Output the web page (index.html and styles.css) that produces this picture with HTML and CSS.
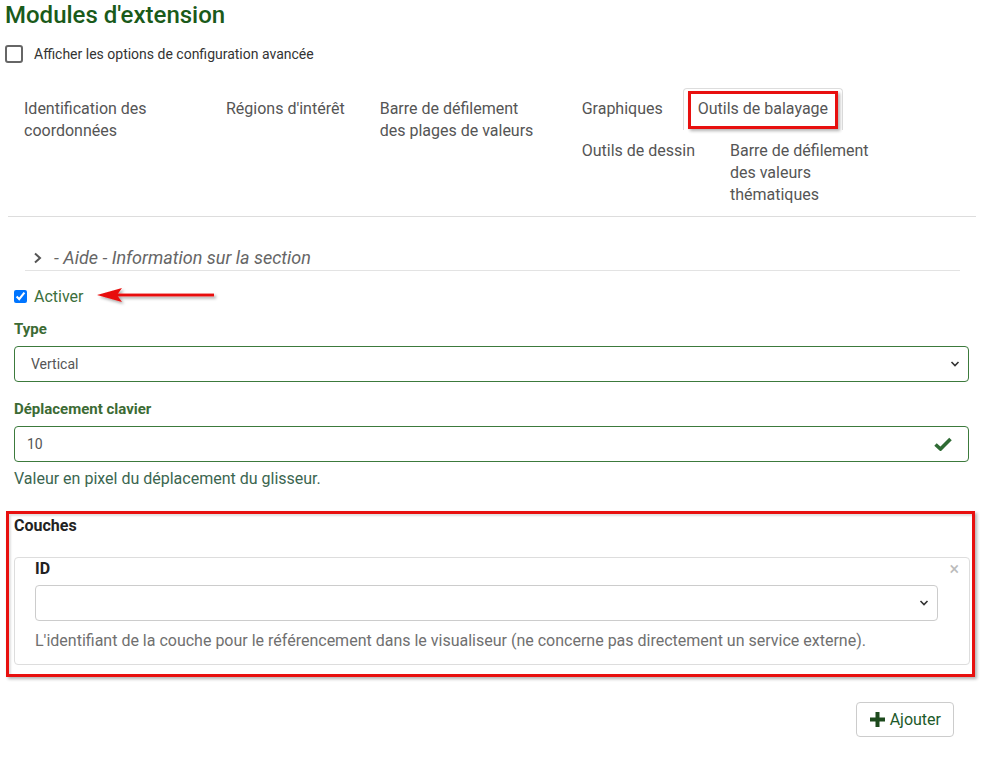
FILE: index.html
```html
<!DOCTYPE html>
<html lang="fr">
<head>
<meta charset="utf-8">
<title>Modules d'extension</title>
<link rel="stylesheet" href="styles.css">
</head>
<body>
<div class="page">
  <h1 class="title">Modules d'extension</h1>
  <label class="adv"><span class="box"></span><span>Afficher les options de configuration avancée</span></label>

  <ul class="tabs">
    <li><a>Identification des coordonnées</a></li>
    <li><a>Régions d'intérêt</a></li>
    <li><a>Barre de défilement des plages de valeurs</a></li>
    <li><a>Graphiques</a></li>
    <li class="active"><a>Outils de balayage</a></li>
    <li><a>Outils de dessin</a></li>
    <li><a>Barre de défilement des valeurs thématiques</a></li>
  </ul>

  <div class="form">
    <div class="aide">
      <svg class="chev" width="10" height="12" viewBox="0 0 10 12"><path d="M2 1.5 L7 6 L2 10.5" fill="none" stroke="#555" stroke-width="2"/></svg>
      <span>- Aide - Information sur la section</span>
    </div>

    <div class="activer">
      <input type="checkbox" checked>
      <span class="activer-label">Activer</span>
      <svg class="arrow" width="124" height="22" viewBox="0 0 124 22">
        <defs><filter id="sh" x="-10%" y="-50%" width="130%" height="220%"><feDropShadow dx="2" dy="2" stdDeviation="1.5" flood-color="#000" flood-opacity="0.35"/></filter></defs>
        <g filter="url(#sh)" fill="#e8100f">
          <path d="M1 9 L26 2 L21 9 L26 16 Z"/>
          <rect x="20" y="7.6" width="98" height="2.8"/>
        </g>
      </svg>
    </div>

    <div class="field">
      <div class="label success">Type</div>
      <div class="control success-border">
        <span class="val">Vertical</span>
        <svg class="caret" width="10" height="8" viewBox="0 0 10 8"><path d="M1.5 2 L5 5.5 L8.5 2" fill="none" stroke="#333" stroke-width="1.6"/></svg>
      </div>
    </div>

    <div class="field">
      <div class="label success">Déplacement clavier</div>
      <div class="control success-border input">
        <span class="val">10</span>
        <svg class="check" width="18" height="14" viewBox="0 0 18 14"><path d="M1.5 7.5 L6.5 12 L16.5 2" fill="none" stroke="#2f6b34" stroke-width="3.6" stroke-linejoin="miter"/></svg>
      </div>
      <div class="help success-text">Valeur en pixel du déplacement du glisseur.</div>
    </div>

    <div class="couches">
      <div class="couches-title">Couches</div>
      <div class="panel">
        <div class="panel-head">
          <span class="id">ID</span>
          <span class="close">×</span>
        </div>
        <div class="control plain">
          <span class="val"></span>
          <svg class="caret" width="10" height="8" viewBox="0 0 10 8"><path d="M1.5 2 L5 5.5 L8.5 2" fill="none" stroke="#333" stroke-width="1.6"/></svg>
        </div>
        <div class="help gray">L'identifiant de la couche pour le référencement dans le visualiseur (ne concerne pas directement un service externe).</div>
      </div>
    </div>

    <div class="actions">
      <button class="btn">
        <svg width="17" height="17" viewBox="0 0 17 17"><path d="M6.5 1 H10.5 V6.5 H16 V10.5 H10.5 V16 H6.5 V10.5 H1 V6.5 H6.5 Z" fill="#1d4a1d"/></svg>
        <span>Ajouter</span>
      </button>
    </div>
  </div>
</div>
</body>
</html>
```

FILE: styles.css
```css
* { box-sizing: border-box; }
html, body { margin: 0; padding: 0; background: #fff; }
body {
  font-family: Roboto, "Liberation Sans", sans-serif;
  color: #333;
}
.page {
  padding: 0 12px 0 5px;
  width: 988px;
}
.title {
  margin: 0;
  font-size: 24px;
  line-height: 30px;
  font-weight: 500;
  color: #1a5a1a;
}
.adv {
  display: flex;
  align-items: center;
  margin-top: 15px;
  height: 18px;
  font-size: 14px;
  color: #333;
}
.adv .box {
  width: 18px;
  height: 18px;
  border: 2px solid #666;
  border-radius: 3px;
  margin-right: 11px;
}

/* tabs */
.tabs {
  list-style: none;
  margin: 25px 0 0 3px;
  padding: 0 0 0 1px;
  border-bottom: 1px solid #ddd;
  display: flow-root;
  width: 968px;
}
.tabs li {
  float: left;
  margin-right: 5px;
  max-width: 197px;
  border: 1px solid transparent;
  border-bottom: 0;
  position: relative;
}
.tabs li a {
  display: block;
  padding: 9px 14px 10px;
  font-size: 16px;
  line-height: 22px;
  color: #555;
}
.tabs li.active {
  border-color: #ddd;
  border-radius: 4px 4px 0 0;
  background: #fff;
}
.tabs li.active::after {
  content: "";
  position: absolute;
  left: 4px;
  right: 4px;
  top: 2px;
  bottom: 1px;
  border: 3px solid #e8100f;
  box-shadow: 2px 2px 3px rgba(0,0,0,0.3);
}

/* form */
.form {
  padding: 0 7px 0 9px;
}
.aide {
  margin: 28px 9px 0 11px;
  padding-top: 1px;
  border-bottom: 1px solid #e3e3e3;
  display: flex;
  align-items: center;
  font-size: 18px;
  line-height: 24px;
  font-style: italic;
  color: #666;
}
.aide .chev { margin: 0 11px 0 8px; }

.activer {
  position: relative;
  display: flex;
  align-items: center;
  margin-top: 14px;
  height: 22px;
  font-size: 16px;
}
.activer input {
  margin: 0 7px 0 0;
  width: 13px;
  height: 13px;
}
.activer-label { color: #3c6f3c; }
.activer .arrow {
  position: absolute;
  left: 82px;
  top: 1px;
}

.field { margin-top: 12px; }
.field + .field { margin-top: 17px; }
.label {
  font-size: 15px;
  line-height: 20px;
  font-weight: 700;
}
.success { color: #3c6b34; }
.control {
  margin-top: 7px;
  height: 36px;
  border-radius: 4px;
  display: flex;
  align-items: center;
  justify-content: space-between;
  padding: 0 8px 0 16px;
  font-size: 14px;
  color: #555;
  background: #fff;
}
.control.input { padding: 0 16px 0 12px; }
.success-border { border: 1px solid #3c7a3c; }
.help {
  margin-top: 6px;
  font-size: 16px;
  line-height: 22px;
}
.success-text { color: #3b6650; }
.gray { color: #707070; }

/* couches */
.couches {
  margin: 21px -6px 0 -8px;
  border: 3px solid #e8100f;
  box-shadow: 2px 2px 3px rgba(0,0,0,0.3), inset 2px 2px 2px rgba(0,0,0,0.12);
  padding: 1px 2px 9px 5px;
}
.couches-title {
  font-size: 16px;
  line-height: 22px;
  font-weight: 700;
  color: #222;
}
.panel {
  margin-top: 20px;
  border: 1px solid #ddd;
  border-radius: 4px;
  padding: 0 31px 12px 20px;
  position: relative;
}
.panel-head {
  height: 22px;
  display: flex;
  align-items: center;
}
.id {
  font-size: 16px;
  line-height: 22px;
  font-weight: 700;
  color: #222;
}
.close {
  position: absolute;
  right: 10px;
  top: 1px;
  font-size: 18px;
  line-height: 20px;
  color: #bbb;
}
.control.plain {
  border: 1px solid #ccc;
  height: 36px;
  margin-top: 5px;
}
.panel .help { margin-top: 9px; }

.actions {
  display: flex;
  justify-content: flex-end;
  margin-top: 25px;
  padding-right: 15px;
}
.btn {
  display: flex;
  align-items: center;
  gap: 4px;
  height: 35px;
  padding: 0 12px;
  border: 1px solid #ccc;
  border-radius: 4px;
  background: #fff;
  font-family: Roboto, "Liberation Sans", sans-serif;
  font-size: 16px;
  color: #1d5a2a;
}
```
